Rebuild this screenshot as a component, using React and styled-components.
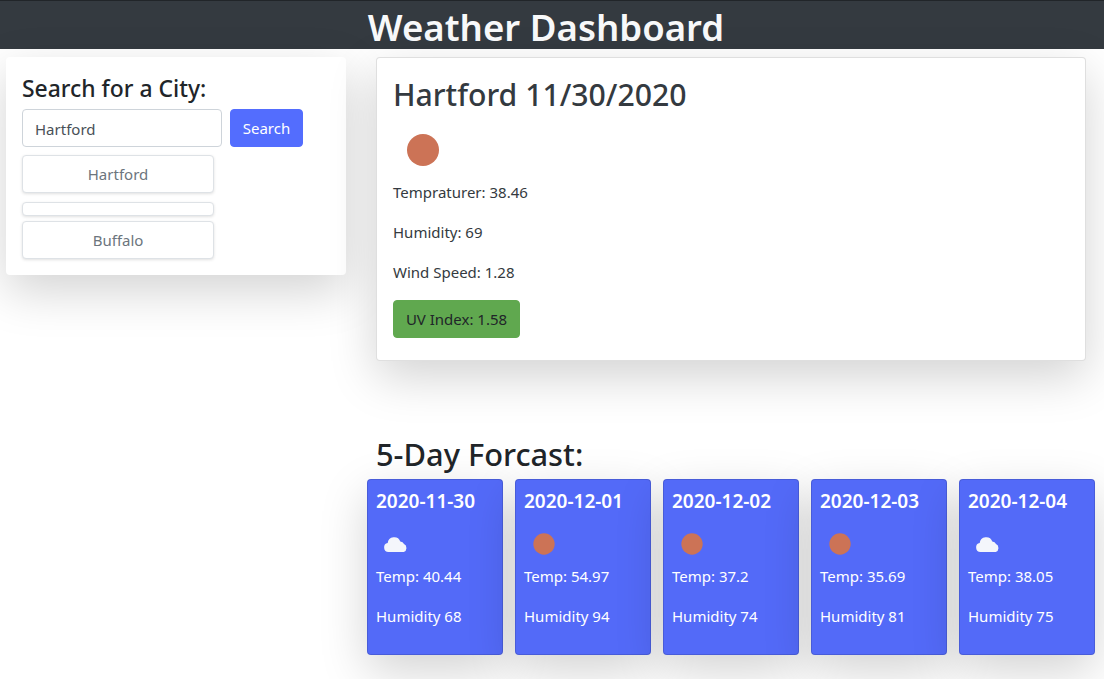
import React from "react";
import styled, { createGlobalStyle } from "styled-components";

const Global = createGlobalStyle`
  html, body { margin: 0; padding: 0; background: #fff; }
  body { font-family: "Noto Sans", "Open Sans", sans-serif; font-size: 15px; line-height: 24px; color: #343a40; overflow: hidden; height: 679px; }
  * { box-sizing: border-box; }
`;

const Header = styled.header`
  height: 49px;
  background: #343a40;
  border-top: 1px solid #212529;
  padding: 4px 12px 0 0;
  text-align: center;
`;
const Title = styled.h1`
  margin: 0;
  font-size: 36.6px;
  font-weight: 600;
  line-height: 44px;
  color: #f8f9fa;
`;
const Page = styled.main`
  display: grid;
  grid-template-columns: 340px 710px;
  column-gap: 30px;
  padding: 8px 0 0 6px;
  align-items: start;
`;
const SearchCard = styled.section`
  background: #fff;
  border-radius: 4px;
  padding: 16px;
  height: 218px;
  box-shadow: 0 16px 48px rgba(0, 0, 0, 0.175);
`;
const SearchTitle = styled.h4`
  margin: 0 0 4px;
  font-size: 22.9px;
  font-weight: 500;
  line-height: 32px;
  color: #212529;
`;
const SearchRow = styled.div`
  display: flex;
  gap: 8px;
  margin-bottom: 8px;
`;
const Input = styled.input`
  width: 200px;
  height: 38px;
  padding: 1px 12px 0;
  border: 1px solid #ced4da;
  border-radius: 4px;
  font: inherit;
  color: #495057;
  outline: none;
`;
const SearchButton = styled.button`
  width: 73px;
  height: 38px;
  background: #536dfe;
  border: 1px solid #536dfe;
  border-radius: 4px;
  color: #fff;
  font: inherit;
  padding: 0;
`;
const CityList = styled.div`
  display: flex;
  flex-direction: column;
  width: 192px;
`;
const CityButton = styled.button`
  height: ${(p) => (p.$empty ? "14px" : "38px")};
  margin-bottom: ${(p) => (p.$empty ? "5px" : "9px")};
  background: #fff;
  border: 1px solid #dee2e6;
  border-radius: 4px;
  box-shadow: 0 1px 3px rgba(0, 0, 0, 0.12);
  color: #6c757d;
  font: inherit;
  padding: 0;
`;
const Right = styled.div`
  display: flex;
  flex-direction: column;
`;
const CurrentCard = styled.section`
  height: 304px;
  background: #fff;
  border: 1px solid rgba(0, 0, 0, 0.125);
  border-radius: 4px;
  padding: 16px;
  box-shadow: 0 16px 48px rgba(0, 0, 0, 0.175);
`;
const CityTitle = styled.h2`
  margin: 0 0 4px;
  font-size: 30.2px;
  font-weight: 500;
  line-height: 42px;
  color: #343a40;
`;
const Icon = styled.svg`
  display: block;
  width: ${(p) => p.$size}px;
  height: ${(p) => p.$size}px;
`;
const Line = styled.p`
  margin: 0 0 16px;
`;
const UvButton = styled.button`
  display: block;
  width: 127px;
  height: 38px;
  background: #60a84f;
  border: 1px solid #60a84f;
  border-radius: 4px;
  color: #212529;
  font: inherit;
  padding: 0;
`;
const ForecastTitle = styled.h3`
  margin: 75px 0 7px;
  font-size: 30.8px;
  font-weight: 500;
  line-height: 36px;
  color: #212529;
`;
const ForecastRow = styled.div`
  display: flex;
  gap: 12px;
  margin-left: -9px;
`;
const DayCard = styled.article`
  flex: 0 0 136px;
  height: 176px;
  background: #536af8;
  border: 1px solid rgba(0, 0, 0, 0.125);
  border-radius: 4px;
  padding: 8px;
  color: #fff;
  box-shadow: 0 16px 48px rgba(0, 0, 0, 0.175);
`;
const DayTitle = styled.h5`
  margin: 0 0 9px;
  font-size: 19px;
  font-weight: 600;
  line-height: 27px;
`;
const DayLine = styled.p`
  margin: 0 0 16px;
`;

const Sun = ({ size }) => (
  <Icon $size={size} viewBox="0 0 60 60" aria-hidden="true">
    <circle cx="30" cy="30" r="16" fill="#cc7356" />
  </Icon>
);
const Cloud = () => (
  <Icon $size={40} viewBox="0 0 40 40" aria-hidden="true">
    <path
      d="M12.5 28a4.500 4.500 0 0 1-.8-8.900 6.500 6.500 0 0 1 12.600-1.500 4 4 0 0 1 3.700 2.500A4.300 4.300 0 0 1 27.700 28z"
      fill="#f4f6fb"
    />
  </Icon>
);

const days = [
  { date: "2020-11-30", temp: "40.44", humidity: 68, cloud: true },
  { date: "2020-12-01", temp: "54.97", humidity: 94 },
  { date: "2020-12-02", temp: "37.2", humidity: 74 },
  { date: "2020-12-03", temp: "35.69", humidity: 81 },
  { date: "2020-12-04", temp: "38.05", humidity: 75, cloud: true },
];

export default function App() {
  return (
    <>
      <Global />
      <Header>
        <Title>Weather Dashboard</Title>
      </Header>
      <Page>
        <SearchCard>
          <SearchTitle>Search for a City:</SearchTitle>
          <SearchRow>
            <Input defaultValue="Hartford" />
            <SearchButton>Search</SearchButton>
          </SearchRow>
          <CityList>
            <CityButton>Hartford</CityButton>
            <CityButton $empty />
            <CityButton>Buffalo</CityButton>
          </CityList>
        </SearchCard>
        <Right>
          <CurrentCard>
            <CityTitle>Hartford 11/30/2020</CityTitle>
            <Sun size={60} />
            <Line>Tempraturer: 38.46</Line>
            <Line>Humidity: 69</Line>
            <Line>Wind Speed: 1.28</Line>
            <UvButton>UV Index: 1.58</UvButton>
          </CurrentCard>
          <ForecastTitle>5-Day Forcast:</ForecastTitle>
          <ForecastRow>
            {days.map((d) => (
              <DayCard key={d.date}>
                <DayTitle>{d.date}</DayTitle>
                {d.cloud ? <Cloud /> : <Sun size={40} />}
                <DayLine>Temp: {d.temp}</DayLine>
                <DayLine>Humidity {d.humidity}</DayLine>
              </DayCard>
            ))}
          </ForecastRow>
        </Right>
      </Page>
    </>
  );
}
